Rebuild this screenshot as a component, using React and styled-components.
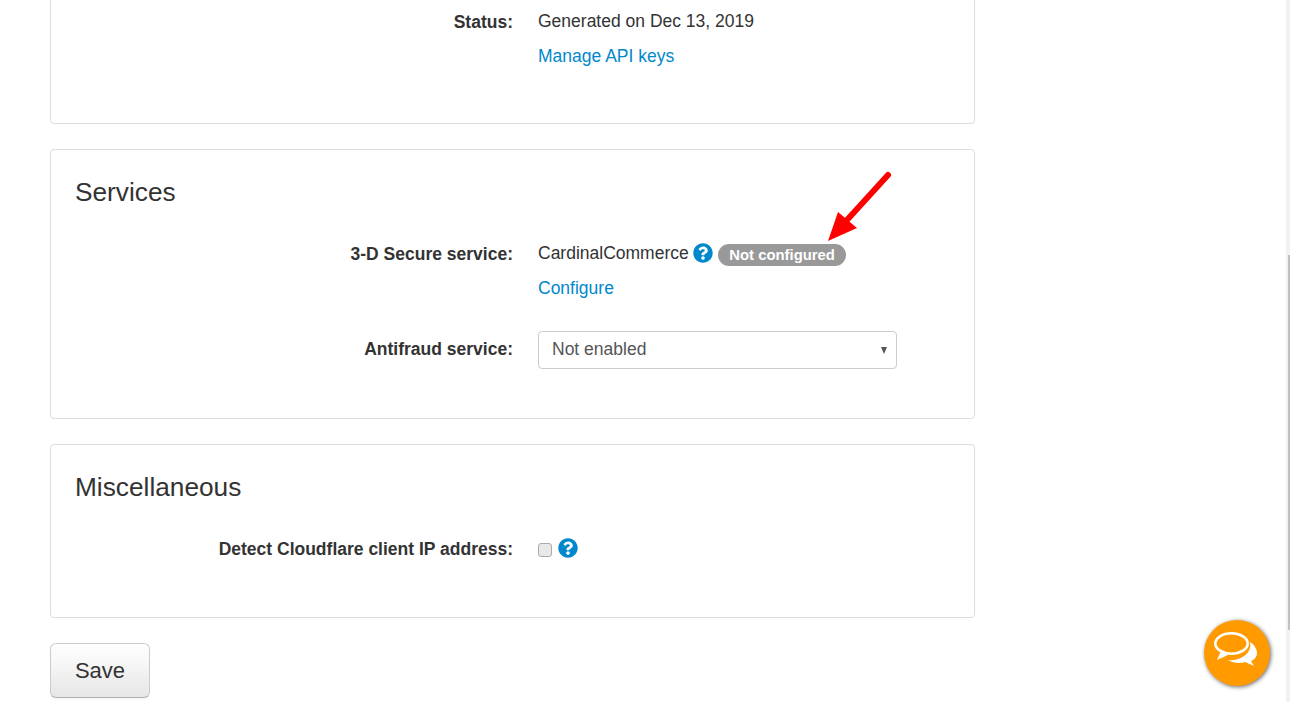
import React from 'react'
import styled, { createGlobalStyle } from 'styled-components'
import { FaQuestionCircle } from 'react-icons/fa'

const GlobalStyle = createGlobalStyle`
  html, body {
    margin: 0;
    height: 702px;
    overflow: hidden;
    background: #fff;
  }
  body {
    font-family: 'Liberation Sans', Arial, sans-serif;
    font-size: 17.5px;
    line-height: 24px;
    color: #333;
  }
`
const Page = styled.div`
  width: 925px;
  margin-left: 50px;
  margin-top: -26px;
`
const Panel = styled.section`
  height: ${(props) => props.height};
  box-sizing: border-box;
  margin-bottom: 25px;
  padding: ${(props) => props.top || '24px'} 24px 0;
  background: #fff;
  border: 1px solid #ddd;
  border-radius: 4px;
`
const Heading = styled.h3`
  margin: 0 0 32px;
  font-size: 26.25px;
  font-weight: 400;
  line-height: 36px;
`
const Row = styled.div`
  display: grid;
  grid-template-columns: 438px 1fr;
  column-gap: 25px;
  margin-bottom: ${(props) => props.gap || '0'};
`
const Label = styled.label`
  font-weight: 700;
  text-align: right;
  line-height: ${(props) => props.lh || '24px'};
`
const Value = styled.div`
  display: flex;
  align-items: center;
  height: 22px;
`
const Link = styled.a`
  display: block;
  margin-top: 12px;
  color: #0088cc;
  text-decoration: none;
`
const HelpIcon = styled(FaQuestionCircle)`
  width: 20px;
  height: 20px;
  margin-left: ${(props) => props.$left || '4px'};
  color: #0088cc;
  flex: none;
`
const Badge = styled.span`
  display: inline-block;
  margin: 4px 0 0 5px;
  padding: 0 11.5px;
  height: 22px;
  line-height: 22px;
  border-radius: 11px;
  background: #999;
  color: #fff;
  font-size: 14.875px;
  font-weight: 700;
`
const Select = styled.div`
  display: flex;
  align-items: center;
  justify-content: space-between;
  box-sizing: border-box;
  width: 359px;
  height: 38px;
  padding: 0 9px 2px 13px;
  border: 1px solid #ccc;
  border-radius: 4px;
  color: #555;
`
const Caret = styled.span`
  width: 0;
  height: 0;
  margin-top: 2px;
  border-left: 3.5px solid transparent;
  border-right: 3.5px solid transparent;
  border-top: 7px solid #555;
`
const Checkbox = styled.span`
  box-sizing: border-box;
  width: 14px;
  height: 14px;
  margin-top: 4px;
  border: 1px solid #aaa;
  border-radius: 3px;
  background: #e8e8e8;
`
const SaveButton = styled.button`
  display: block;
  width: 100px;
  height: 55px;
  padding: 0;
  font: inherit;
  font-size: 22px;
  color: #333;
  border: 1px solid #ccc;
  border-bottom-color: #b3b3b3;
  border-radius: 6px;
  background: linear-gradient(#fff, #e6e6e6);
  box-shadow: 0 1px 2px rgba(0, 0, 0, 0.05);
`
const Arrow = styled.svg`
  position: fixed;
  left: 820px;
  top: 165px;
  width: 80px;
  height: 85px;
`
const Track = styled.div`
  position: fixed;
  top: 0;
  right: 0;
  bottom: 0;
  width: 4px;
  background: #f1f1f1;
`
const Thumb = styled.div`
  position: absolute;
  right: 0;
  top: 255px;
  width: 2px;
  height: 375px;
  background: #c1c1c1;
`
const ChatButton = styled.button`
  position: fixed;
  left: 1204px;
  top: 620px;
  width: 66px;
  height: 66px;
  padding: 0;
  border: 0;
  border-radius: 50%;
  background: #ff9b00;
  box-shadow: 1px 1px 4px rgba(0, 0, 0, 0.6);
`

export default function App() {
  return (
    <>
      <GlobalStyle />
      <Page>
        <Panel height='150px' top='35px'>
          <Row>
            <Label>Status:</Label>
            <div>
              <Value>Generated on Dec 13, 2019</Value>
              <Link href='#'>Manage API keys</Link>
            </div>
          </Row>
        </Panel>
        <Panel height='270px'>
          <Heading>Services</Heading>
          <Row gap='31px'>
            <Label>3-D Secure service:</Label>
            <div>
              <Value>
                CardinalCommerce
                <HelpIcon />
                <Badge>Not configured</Badge>
              </Value>
              <Link href='#'>Configure</Link>
            </div>
          </Row>
          <Row>
            <Label lh='36px'>Antifraud service:</Label>
            <Select>
              Not enabled
              <Caret />
            </Select>
          </Row>
        </Panel>
        <Panel height='174px'>
          <Heading>Miscellaneous</Heading>
          <Row>
            <Label>Detect Cloudflare client IP address:</Label>
            <Value>
              <Checkbox />
              <HelpIcon $left='6px' />
            </Value>
          </Row>
        </Panel>
        <SaveButton>Save</SaveButton>
      </Page>
      <Arrow viewBox='0 0 80 85'>
        <path d='M68 10 L27 55' stroke='#ff0000' strokeWidth='6' strokeLinecap='round' />
        <path d='M8 76 L18 47 L37 63 Z' fill='#ff0000' />
      </Arrow>
      <Track>
        <Thumb />
      </Track>
      <ChatButton aria-label='Chat'>
        <svg width='66' height='66' viewBox='0 0 66 66'>
          <path
            d='M46 22C51 25 53 30 53 33C53 37 50 40 47 41L50 46L41 42C36 44 29 43 24 40C34 41 44 36 46 28C46.5 26 46.5 24 46 22Z'
            fill='#fff'
          />
          <ellipse cx='27.5' cy='23.5' rx='16.2' ry='10.2' fill='none' stroke='#fff' strokeWidth='2.6' />
          <path d='M17 31L13 40L24 35Z' fill='#fff' />
        </svg>
      </ChatButton>
    </>
  )
}
